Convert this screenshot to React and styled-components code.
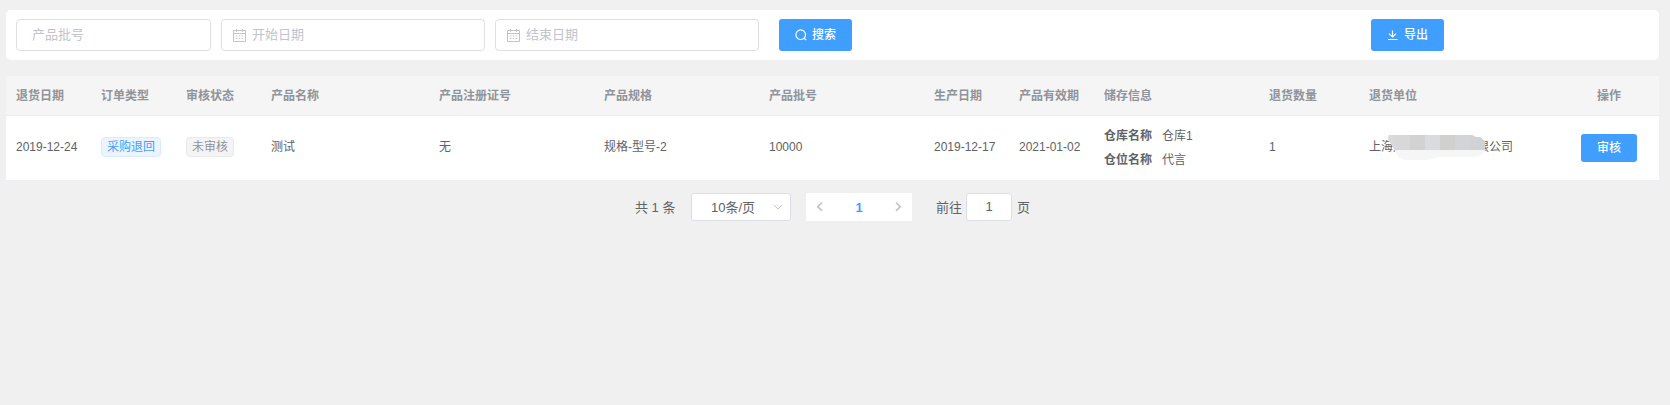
import React from "react";
import styled, { createGlobalStyle, css } from "styled-components";

const GlobalStyle = createGlobalStyle`
  * { box-sizing: border-box; }
  body {
    margin: 0;
    background: #f0f0f0;
    color: #606266;
    font-family: "Liberation Sans", "Noto Sans CJK SC", sans-serif;
    font-size: 12px;
  }
`;

const Page = styled.main`
  width: 1670px;
  min-height: 405px;
  padding: 10px 11px 0 6px;
`;

const Toolbar = styled.section`
  display: flex;
  align-items: center;
  height: 50px;
  padding: 0 215px 0 10px;
  background: #fff;
  border-radius: 5px;
`;

const Field = styled.label`
  display: flex;
  align-items: center;
  width: ${(p) => p.$width}px;
  height: 32px;
  margin-right: 10px;
  padding-left: ${(p) => (p.$icon ? 11 : 15)}px;
  border: 1px solid #dcdfe6;
  border-radius: 4px;
  background: #fff;
  color: #c0c4cc;

  svg { margin-right: 6px; flex: none; }
`;

const FieldInput = styled.input`
  flex: 1;
  min-width: 0;
  height: 28px;
  padding: 0 0 2px;
  border: 0;
  outline: 0;
  background: none;
  color: #606266;
  font: inherit;
  font-size: 13px;
  &::placeholder { color: #c0c4cc; opacity: 1; }
`;

const Button = styled.button`
  display: inline-flex;
  align-items: center;
  justify-content: center;
  gap: 5px;
  width: ${(p) => (p.$small ? 56 : 73)}px;
  height: ${(p) => (p.$small ? 28 : 32)}px;
  padding: 0;
  border: 0;
  border-radius: 3px;
  background: #409eff;
  color: #fff;
  font: inherit;
  font-weight: 500;
  line-height: 1;
`;

const SearchButton = styled(Button)`
  margin-left: 10px;
`;

const ExportButton = styled(Button)`
  margin-left: auto;
`;

const Table = styled.table`
  width: 1653px;
  margin-top: 16px;
  border-collapse: separate;
  border-spacing: 0;
  table-layout: fixed;
  background: #fff;
`;

const cell = css`
  padding: 0 10px ${(p) => (p.$tall ? 0 : 2)}px;
  border-bottom: 1px solid #ebeef5;
  text-align: ${(p) => (p.$center ? "center" : "left")};
  vertical-align: middle;
  white-space: nowrap;
`;

const HeadCell = styled.th`
  ${cell}
  height: 40px;
  background: #f5f5f5;
  color: #909399;
  font-weight: 700;
`;

const Cell = styled.td`
  ${cell}
  height: 65px;
  line-height: 20px;
`;

const Tag = styled.span`
  display: block;
  width: fit-content;
  height: 20px;
  padding: 0 5px;
  border: 1px solid ${(p) => (p.$info ? "#e9e9eb" : "#d9ecff")};
  border-radius: 4px;
  background: ${(p) => (p.$info ? "#f4f4f5" : "#ecf5ff")};
  color: ${(p) => (p.$info ? "#909399" : "#409eff")};
  line-height: 18px;
`;

const StorageLine = styled.div`
  display: flex;
  gap: 10px;
  height: 24px;
  line-height: 24px;
`;

const Label = styled.strong`
  font-weight: 700;
`;

const Company = styled.div`
  position: relative;
  display: flex;
  justify-content: space-between;
  width: 144px;
`;

const Mosaic = styled.svg`
  position: absolute;
  left: 19px;
  top: -2px;
`;

const Pagination = styled.nav`
  display: flex;
  align-items: center;
  height: 28px;
  margin: 12px 0 0 629px;
  font-size: 13px;
`;

const PageText = styled.span`
  padding-bottom: 2px;
`;

const Total = styled(PageText)`
  width: 56px;
`;

const PageSize = styled.div`
  display: flex;
  align-items: center;
  justify-content: space-between;
  width: 100px;
  height: 28px;
  padding: 0 6px 0 19px;
  border: 1px solid #dcdfe6;
  border-radius: 3px;
  background: #fff;
`;

const Pager = styled.div`
  display: flex;
  align-items: center;
  justify-content: space-between;
  width: 106px;
  height: 28px;
  margin: 0 24px 0 15px;
  padding: 0 8px;
  background: #fff;
`;

const CurrentPage = styled.b`
  color: #409eff;
`;

const JumpInput = styled.input`
  width: 46px;
  height: 28px;
  margin: 0 5px 0 4px;
  padding: 0 0 2px;
  border: 1px solid #dcdfe6;
  border-radius: 3px;
  background: #fff;
  color: #606266;
  font: inherit;
  text-align: center;
`;

const CalendarIcon = () => (
  <svg width="13" height="13" viewBox="0 0 13 13" fill="none" stroke="currentColor">
    <path d="M.5 1.5h12v11H.5zM.5 4.5h12M3.5 0v3M9.5 0v3" />
    <path d="M2.8 7h1.6M5.7 7h1.6M8.6 7h1.6M2.8 9.5h1.6M5.7 9.5h1.6M8.6 9.5h1.6" />
  </svg>
);

const SearchIcon = () => (
  <svg width="12" height="12" viewBox="0 0 12 12" fill="none" stroke="currentColor" strokeWidth="1.15">
    <circle cx="5.7" cy="5.7" r="4.8" />
    <path d="M9 9l2.2 2.2" />
  </svg>
);

const DownloadIcon = () => (
  <svg width="12" height="12" viewBox="0 0 12 12" fill="none" stroke="currentColor" strokeWidth="1.15">
    <path d="M5.5 1.5v6.3M2 4.6l3.5 3.3L9 4.6M1 10.5h9.5" />
  </svg>
);

const Chevron = ({ d, weight = 1 }) => (
  <svg width="12" height="12" viewBox="0 0 12 12" fill="none" stroke="#c0c4cc" strokeWidth={weight}>
    <path d={d} />
  </svg>
);

const columns = [
  ["退货日期", 85], ["订单类型", 85], ["审核状态", 85], ["产品名称", 168],
  ["产品注册证号", 165], ["产品规格", 165], ["产品批号", 165], ["生产日期", 85],
  ["产品有效期", 85], ["储存信息", 165], ["退货数量", 100], ["退货单位", 200],
  ["操作", 100],
];

const mosaicColors = ["#dadadb", "#d8d8d9", "#d2d2d2", "#dadbdd", "#d0d0cf", "#d3d4d6", "#d1d2d5"];

function MaskedCompany() {
  return (
    <Company>
      <span>上海广</span>
      <span>限公司</span>
      <Mosaic width="98" height="26" viewBox="0 0 98 26">
        <clipPath id="brush">
          <path d="M1 0H84L88 2H92L97 6V16Q93 22 87 22H52C47 22 45 25 39 25H17Q10 24 7 16Q5 11 1 6Q-1 3 1 0Z" />
        </clipPath>
        <g clipPath="url(#brush)">
          <rect width="98" height="26" fill="#f6f6f6" />
          {mosaicColors.map((fill, i) => (
            <rect key={i} x={i * 15 - 8} width="15" height="15" fill={fill} />
          ))}
        </g>
      </Mosaic>
    </Company>
  );
}

export default function App() {
  return (
    <>
      <GlobalStyle />
      <Page>
        <Toolbar>
          <Field $width={195}><FieldInput placeholder="产品批号" /></Field>
          <Field $width={264} $icon><CalendarIcon /><FieldInput placeholder="开始日期" /></Field>
          <Field $width={264} $icon><CalendarIcon /><FieldInput placeholder="结束日期" /></Field>
          <SearchButton><SearchIcon />搜索</SearchButton>
          <ExportButton><DownloadIcon />导出</ExportButton>
        </Toolbar>
        <Table>
          <colgroup>{columns.map(([name, width]) => <col key={name} width={width} />)}</colgroup>
          <thead>
            <tr>{columns.map(([name]) => <HeadCell key={name} $center={name === "操作"}>{name}</HeadCell>)}</tr>
          </thead>
          <tbody>
            <tr>
              <Cell>2019-12-24</Cell>
              <Cell><Tag>采购退回</Tag></Cell>
              <Cell><Tag $info>未审核</Tag></Cell>
              <Cell>测试</Cell>
              <Cell>无</Cell>
              <Cell>规格-型号-2</Cell>
              <Cell>10000</Cell>
              <Cell>2019-12-17</Cell>
              <Cell>2021-01-02</Cell>
              <Cell $tall>
                <StorageLine><Label>仓库名称</Label><span>仓库1</span></StorageLine>
                <StorageLine><Label>仓位名称</Label><span>代言</span></StorageLine>
              </Cell>
              <Cell>1</Cell>
              <Cell><MaskedCompany /></Cell>
              <Cell $tall $center><Button $small>审核</Button></Cell>
            </tr>
          </tbody>
        </Table>
        <Pagination>
          <Total>共 1 条</Total>
          <PageSize><PageText>10条/页</PageText><Chevron d="M1.8 4l4.2 4 4.2-4" /></PageSize>
          <Pager>
            <Chevron d="M8 1.5L3.8 5.7 8 9.9" weight={1.7} />
            <CurrentPage>1</CurrentPage>
            <Chevron d="M4 1.5L8.2 5.7 4 9.9" weight={1.7} />
          </Pager>
          <PageText>前往</PageText>
          <JumpInput defaultValue="1" />
          <PageText>页</PageText>
        </Pagination>
      </Page>
    </>
  );
}
